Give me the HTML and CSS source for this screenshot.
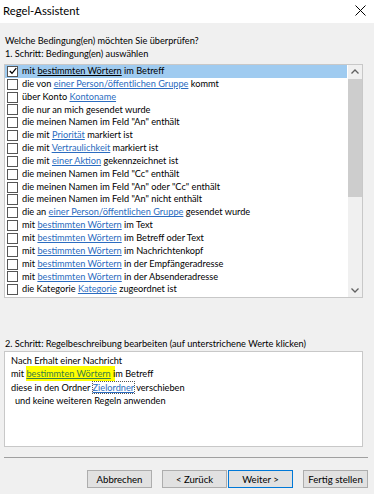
FILE: index.html
```html
<!DOCTYPE html>
<html lang="de">

<head>
    <meta charset="UTF-8">
    <title>Regel-Assistent</title>
    <link rel="stylesheet" href="styles.css">
</head>

<body>
    <div id="dialog">
        <!-- Title bar -->
        <div class="titlebar">
            <span class="title">Regel-Assistent</span>
            <svg class="close" width="11" height="11" viewBox="0 0 11 11">
                <path d="M0.5 0.5 L10.5 10.5 M10.5 0.5 L0.5 10.5" stroke="#000" stroke-width="1" fill="none"/>
            </svg>
        </div>

        <div class="content">
            <p class="label first">Welche Bedingung(en) möchten Sie überprüfen?</p>
            <p class="label">1. Schritt: Bedingung(en) auswählen</p>

            <!-- Step 1: list of conditions -->
            <div class="listbox">
                <ul id="conditionList"></ul>
                <div class="scrollbar">
                    <div class="arrow">
                        <svg width="8" height="5" viewBox="0 0 8 5"><path d="M0.5 4.5 L4 1 L7.5 4.5" stroke="#606060" stroke-width="1.3" fill="none"/></svg>
                    </div>
                    <div class="thumb"></div>
                    <div class="track"></div>
                    <div class="arrow">
                        <svg width="8" height="5" viewBox="0 0 8 5"><path d="M0.5 0.5 L4 4 L7.5 0.5" stroke="#606060" stroke-width="1.3" fill="none"/></svg>
                    </div>
                </div>
            </div>

            <!-- Step 2: rule description -->
            <p class="label step2">2. Schritt: Regelbeschreibung bearbeiten (auf unterstrichene Werte klicken)</p>
            <div class="description">
                <p>Nach Erhalt einer Nachricht</p>
                <p>mit <span class="hl"><a class="link">bestimmten Wörtern</a> i</span>m Betreff</p>
                <p>diese in den Ordner <a class="link focus">Zielordner</a> verschieben</p>
                <p class="indent">und keine weiteren Regeln anwenden</p>
            </div>

            <div class="separator"></div>

            <div class="buttons">
                <button>Abbrechen</button>
                <div class="pair">
                    <button>&lt; Zurück</button>
                    <button class="default">Weiter &gt;</button>
                </div>
                <button>Fertig stellen</button>
            </div>
        </div>
    </div>

    <script>
        // Conditions: [text before, link, text after]
        const conditions = [
            ["mit ", "bestimmten Wörtern", " im Betreff"],
            ["die von ", "einer Person/öffentlichen Gruppe", " kommt"],
            ["über Konto ", "Kontoname", ""],
            ["die nur an mich gesendet wurde", "", ""],
            ["die meinen Namen im Feld \"An\" enthält", "", ""],
            ["die mit ", "Priorität", " markiert ist"],
            ["die mit ", "Vertraulichkeit", " markiert ist"],
            ["die mit ", "einer Aktion", " gekennzeichnet ist"],
            ["die meinen Namen im Feld \"Cc\" enthält", "", ""],
            ["die meinen Namen im Feld \"An\" oder \"Cc\" enthält", "", ""],
            ["die meinen Namen im Feld \"An\" nicht enthält", "", ""],
            ["die an ", "einer Person/öffentlichen Gruppe", " gesendet wurde"],
            ["mit ", "bestimmten Wörtern", " im Text"],
            ["mit ", "bestimmten Wörtern", " im Betreff oder Text"],
            ["mit ", "bestimmten Wörtern", " im Nachrichtenkopf"],
            ["mit ", "bestimmten Wörtern", " in der Empfängeradresse"],
            ["mit ", "bestimmten Wörtern", " in der Absenderadresse"],
            ["die Kategorie ", "Kategorie", " zugeordnet ist"]
        ];

        const list = document.getElementById('conditionList');
        conditions.forEach((c, index) => {
            const li = document.createElement('li');
            if (index === 0) li.classList.add('selected');
            li.innerHTML = `<span class="checkbox">${index === 0 ? '<svg width="8" height="8" viewBox="0 0 8 8"><path d="M0.8 4 L3 6.3 L7.3 1.2" stroke="#000" stroke-width="1.3" fill="none"/></svg>' : ''}</span>`
                + `<span>${c[0]}${c[1] ? `<a class="${index === 0 ? 'plain' : 'link'}">${c[1]}</a>` : ''}${c[2]}</span>`;
            list.appendChild(li);
        });
    </script>
</body>

</html>
```

FILE: styles.css
```css
/* Basic reset */
body,
html {
    margin: 0;
    padding: 0;
    width: 374px;
    height: 494px;
    overflow: hidden;
    font-family: Lato, "Noto Sans", sans-serif;
    font-size: 9.2px;
    color: #000;
    background: #f0f0f0;
}

p {
    margin: 0;
}

/* Title bar */
.titlebar {
    height: 21px;
    background: #fff;
    display: flex;
    align-items: center;
    justify-content: space-between;
    padding: 0 8px 2px 3px;
}

.title {
    font-size: 11.3px;
}

.content {
    padding: 0 4px;
}

.label {
    height: 13px;
    line-height: 13px;
    padding-left: 1px;
    white-space: nowrap;
}

.label.first {
    margin-top: 11px;
}

/* Condition list */
.listbox {
    display: flex;
    margin-top: 4px;
    height: 232px;
    width: 357px;
    border: 1px solid #c8c8c8;
    background: #fff;
}

#conditionList {
    flex: 1;
    list-style: none;
    margin: 0;
    padding: 0;
}

#conditionList li {
    display: flex;
    align-items: center;
    height: 12.85px;
    line-height: 12.85px;
    white-space: nowrap;
}

#conditionList li.selected {
    background: #9fcbf0;
}

.checkbox {
    width: 9px;
    height: 9px;
    border: 1px solid #555;
    background: #fff;
    margin: 0 4px 0 2px;
    display: flex;
    align-items: center;
    justify-content: center;
    flex-shrink: 0;
}

.link {
    color: #2b6cc0;
    text-decoration: underline;
}

.plain {
    text-decoration: underline;
}

/* Scrollbar */
.scrollbar {
    width: 14px;
    display: flex;
    flex-direction: column;
    background: #f0f0f0;
    margin-left: 1px;
}

.arrow {
    height: 13px;
    display: flex;
    align-items: center;
    justify-content: center;
}

.thumb {
    height: 118px;
    background: #cdcdcd;
    margin: 1px 0;
}

.track {
    flex: 1;
}

/* Step 2 */
.label.step2 {
    margin-top: 39px;
}

.description {
    margin-top: 1px;
    border: 1px solid #c8c8c8;
    background: #fff;
    padding: 2px 0 0 6px;
    box-sizing: border-box;
    width: 359px;
    height: 96px;
}

.description p {
    height: 13.3px;
    line-height: 13.3px;
    white-space: nowrap;
}

.description .indent {
    padding-left: 4px;
}

.hl {
    background: #ffff00;
    padding: 2px 0 2px;
}

.hl .link {
    color: #3a7d44;
}

.focus {
    outline: 1px dotted #555;
    outline-offset: 0;
}

.separator {
    margin-top: 10px;
    width: 364px;
    border-top: 1px solid #a0a0a0;
}

/* Buttons */
.buttons {
    display: flex;
    justify-content: flex-end;
    gap: 10px;
    margin-top: 12px;
    padding-right: 2px;
}

.pair {
    display: flex;
    gap: 1px;
}

button {
    width: 65px;
    height: 18px;
    padding: 0;
    white-space: nowrap;
    font-family: Lato, "Noto Sans", sans-serif;
    font-size: 9.6px;
    color: #000;
    background: #e1e1e1;
    border: 1px solid #adadad;
}

button.default {
    border-color: #0078d7;
}
```
